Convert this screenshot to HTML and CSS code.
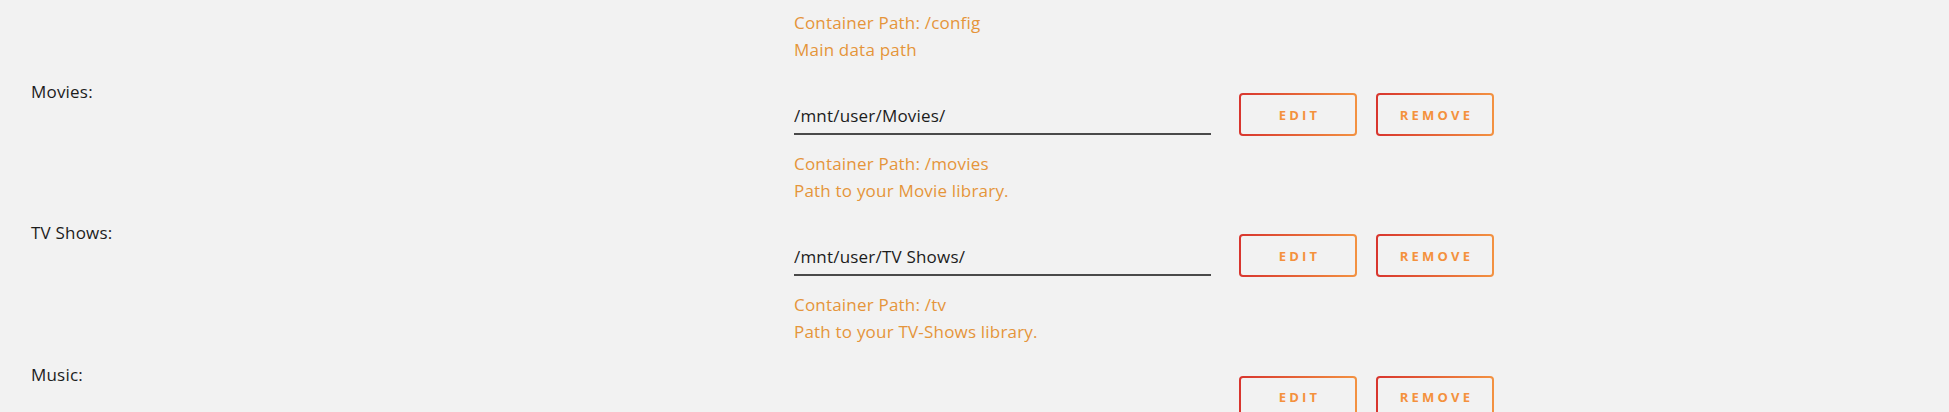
FILE: index.html
```html
<html>
<head>
    <title>Docker container paths</title>
    <link rel="stylesheet" href="styles.css">
</head>
<body>
    <div class="settings">
        <!-- tail of the AppData entry, scrolled above -->
        <div class="row">
            <div class="row-label"></div>
            <div class="field flush">
                <div class="desc">
                    Container Path: /config<br>
                    Main data path
                </div>
            </div>
        </div>

        <div class="row">
            <div class="row-label">Movies:</div>
            <div class="field">
                <div class="entry">
                    <input type="text" class="path" value="/mnt/user/Movies/">
                    <button type="button" class="btn">Edit</button>
                    <button type="button" class="btn">Remove</button>
                </div>
                <div class="desc">
                    Container Path: /movies<br>
                    Path to your Movie library.
                </div>
            </div>
        </div>

        <div class="row">
            <div class="row-label">TV Shows:</div>
            <div class="field">
                <div class="entry">
                    <input type="text" class="path" value="/mnt/user/TV Shows/">
                    <button type="button" class="btn">Edit</button>
                    <button type="button" class="btn">Remove</button>
                </div>
                <div class="desc">
                    Container Path: /tv<br>
                    Path to your TV-Shows library.
                </div>
            </div>
        </div>

        <div class="row">
            <div class="row-label">Music:</div>
            <div class="field">
                <div class="entry">
                    <input type="text" class="path" value="">
                    <button type="button" class="btn">Edit</button>
                    <button type="button" class="btn">Remove</button>
                </div>
            </div>
        </div>
    </div>
</body>
</html>
```

FILE: styles.css
```css
body {
    margin: 0;
    background: #f2f2f2;
    font-family: "Open Sans", "Noto Sans", sans-serif;
    font-size: 17px;
    letter-spacing: 0.2px;
    color: #1c1c1c;
    height: 412px;
    overflow: hidden;
}
.settings {
    padding: 10px 0 0 31px;
}
.row {
    display: grid;
    grid-template-columns: 763px 1fr;
    margin-bottom: 19px;
}
.row-label {
    line-height: 20px;
}
.field {
    padding-top: 11px;
}
.field.flush {
    padding-top: 0;
}
.field.flush .desc {
    margin-top: 0;
}
.entry {
    display: flex;
    align-items: flex-start;
}
.path {
    width: 417px;
    height: 42px;
    box-sizing: border-box;
    margin: 0;
    padding: 12px 0 8px;
    border: 0;
    border-bottom: 2px solid #4a4a4a;
    background: transparent;
    font: inherit;
    letter-spacing: inherit;
    color: #1c1c1c;
    outline: none;
}
.btn {
    width: 118px;
    height: 43px;
    box-sizing: border-box;
    margin: 0 0 0 19px;
    padding: 0 0 0 3px;
    border: 2px solid transparent;
    border-radius: 4px;
    background: linear-gradient(#f2f2f2, #f2f2f2) padding-box,
                linear-gradient(90deg, #d8352e, #f39241) border-box;
    font-family: "Open Sans", sans-serif;
    font-size: 13px;
    font-weight: bold;
    letter-spacing: 3.2px;
    text-transform: uppercase;
    color: #f4913d;
    cursor: pointer;
}
.path + .btn {
    margin-left: 28px;
}
.desc {
    margin-top: 15px;
    line-height: 26.6px;
    color: #e5953a;
}
```
